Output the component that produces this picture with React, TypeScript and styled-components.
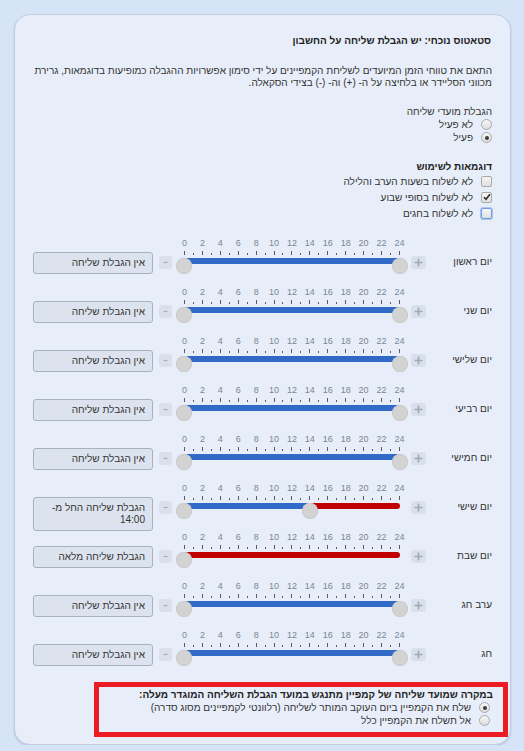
import React from 'react';
import styled, { createGlobalStyle } from 'styled-components';

const GlobalStyle = createGlobalStyle`
  html, body { margin: 0; padding: 0; background: #d6e4f8; }
  body {
    font-family: "Liberation Sans", Arial, "DejaVu Sans", sans-serif;
    font-size: 10px;
    color: #333;
  }
`;

const Page = styled.div`
  padding: 14px 13px 0 14px;
`;

const Card = styled.div`
  direction: rtl;
  width: 497px;
  box-sizing: border-box;
  background: #e8eef9;
  border: 1px solid #c3cfdf;
  border-radius: 16px;
  box-shadow: 0 1px 2px rgba(60, 80, 110, 0.25);
  padding: 19px 18px 7px 18px;
`;

const Title = styled.div`
  font-weight: bold;
  color: #222;
  line-height: 14px;
  margin-right: 1px;
`;

const Intro = styled.p`
  margin: 17px 0 0;
  line-height: 12px;
`;

const Group = styled.div`
  margin-top: 16px;
`;

const GroupHeading = styled.div<{ $bold?: boolean }>`
  line-height: 13px;
  font-weight: ${p => (p.$bold ? 'bold' : 'normal')};
  color: ${p => (p.$bold ? '#222' : '#333')};
`;

const OptionRow = styled.label<{ $h?: number }>`
  display: flex;
  align-items: center;
  gap: 8px;
  height: ${p => p.$h ?? 13}px;
  line-height: 13px;
  white-space: nowrap;
`;

const RadioDot = styled.span<{ $checked?: boolean }>`
  position: relative;
  width: 11px;
  height: 11px;
  box-sizing: border-box;
  border-radius: 50%;
  border: 1px solid #a9a9a9;
  background: linear-gradient(#f6f6f6, #dedede);
  flex: none;
  &::after {
    content: '';
    display: ${p => (p.$checked ? 'block' : 'none')};
    position: absolute;
    left: 2.5px;
    top: 2.5px;
    width: 4px;
    height: 4px;
    border-radius: 50%;
    background: #3c3c3c;
  }
`;

const CheckBox = styled.span<{ $focus?: boolean }>`
  width: 11px;
  height: 11px;
  box-sizing: border-box;
  border-radius: 2px;
  border: 1px solid ${p => (p.$focus ? '#6f9be0' : '#a9a9a9')};
  box-shadow: ${p => (p.$focus ? '0 0 0 1px #a9c5f0' : 'none')};
  background: linear-gradient(#f6f6f6, #e0e0e0);
  flex: none;
  display: flex;
  align-items: center;
  justify-content: center;
`;

const Sliders = styled.div`
  margin-top: 16px;
`;

const Row = styled.div`
  display: flex;
  align-items: flex-start;
  height: 49px;
`;

const DayLabel = styled.div`
  width: 56px;
  margin-left: 10px;
  margin-top: 18px;
  line-height: 14px;
  white-space: nowrap;
`;

const StepButton = styled.div<{ $w: number }>`
  width: ${p => p.$w}px;
  height: 13px;
  margin-top: 19px;
  border-radius: 3px;
  background: #d9e0ec;
  color: #a3abb8;
  display: flex;
  align-items: center;
  justify-content: center;
  flex: none;
`;

const Slider = styled.div`
  direction: ltr;
  width: 232px;
  margin: 0 3px 0 4px;
  flex: none;
`;

const Scale = styled.div`
  padding: 0 8px;
`;

const TickRow = styled.div`
  display: flex;
  justify-content: space-between;
  height: 18px;
`;

const Tick = styled.div`
  width: 1px;
  height: 18px;
  display: flex;
  flex-direction: column;
  align-items: center;
  justify-content: flex-end;
`;

const TickLabel = styled.span`
  font-size: 9px;
  line-height: 10px;
  color: #7b8593;
  white-space: nowrap;
  margin-bottom: 3px;
`;

const TickLine = styled.span<{ $major: boolean }>`
  width: 1px;
  height: ${p => (p.$major ? 4 : 2)}px;
  background: #5a5a5a;
  flex: none;
`;

const Track = styled.div`
  position: relative;
  height: 16px;
  margin-top: -2px;
`;

const Bar = styled.div`
  display: flex;
  height: 6px;
  margin: 5px 8px 0;
  border-radius: 3px;
  overflow: hidden;
`;

const Segment = styled.div<{ $red: boolean; $hours: number }>`
  flex: ${p => p.$hours} 0 0;
  background: ${p => (p.$red ? '#c00000' : '#3169c6')};
`;

const Thumb = styled.div`
  position: absolute;
  top: 0;
  width: 16px;
  height: 16px;
  border-radius: 50%;
  background: #d3d3d3;
  box-shadow: inset 0 0 0 1px #cbcbcb;
`;

const StatusBox = styled.div`
  width: 120px;
  box-sizing: border-box;
  margin-top: 15px;
  margin-right: 6px;
  padding: 4px 7px;
  line-height: 12px;
  border: 1px solid #a9b1bd;
  border-radius: 3px;
  background: #dce3ee;
  color: #333;
  white-space: nowrap;
  flex: none;
`;

const Notice = styled.div`
  margin-top: 4px;
  margin-right: -16px;
  width: 414px;
  box-sizing: border-box;
  border: 5px solid #ec1c24;
  padding: 1px 13px 5px;
`;

const NoticeTitle = styled.div`
  font-weight: bold;
  color: #222;
  line-height: 13px;
  margin-right: -3px;
`;

type Seg = { red: boolean; hours: number };
type Day = { name: string; segs: Seg[]; thumbs: number[]; status: React.ReactNode };

const FREE = 'אין הגבלת שליחה';

const days: Day[] = [
  { name: 'יום ראשון', segs: [{ red: false, hours: 24 }], thumbs: [0, 24], status: FREE },
  { name: 'יום שני', segs: [{ red: false, hours: 24 }], thumbs: [0, 24], status: FREE },
  { name: 'יום שלישי', segs: [{ red: false, hours: 24 }], thumbs: [0, 24], status: FREE },
  { name: 'יום רביעי', segs: [{ red: false, hours: 24 }], thumbs: [0, 24], status: FREE },
  { name: 'יום חמישי', segs: [{ red: false, hours: 24 }], thumbs: [0, 24], status: FREE },
  {
    name: 'יום שישי',
    segs: [{ red: false, hours: 14 }, { red: true, hours: 10 }],
    thumbs: [0, 14],
    status: (
      <>
        הגבלת שליחה החל מ-
        <br />
        14:00
      </>
    ),
  },
  { name: 'יום שבת', segs: [{ red: true, hours: 24 }], thumbs: [0], status: 'הגבלת שליחה מלאה' },
  { name: 'ערב חג', segs: [{ red: false, hours: 24 }], thumbs: [0, 24], status: FREE },
  { name: 'חג', segs: [{ red: false, hours: 24 }], thumbs: [0, 24], status: FREE },
];

const hours = Array.from({ length: 25 }, (_, i) => i);

function Plus() {
  return (
    <svg width="9" height="9" viewBox="0 0 9 9">
      <path d="M4.5 0.5v8M0.5 4.5h8" stroke="#a0a8b5" strokeWidth="1.6" />
    </svg>
  );
}

function Minus() {
  return (
    <svg width="5" height="3" viewBox="0 0 5 3">
      <path d="M0.5 1.5h4" stroke="#a6aebb" strokeWidth="1.2" />
    </svg>
  );
}

function Check() {
  return (
    <svg width="8" height="8" viewBox="0 0 8 8">
      <path d="M1 4.2l2 2L7 1.2" fill="none" stroke="#2b2b2b" strokeWidth="1.6" />
    </svg>
  );
}

function DayRow({ day }: { day: Day }) {
  return (
    <Row>
      <DayLabel>{day.name}</DayLabel>
      <StepButton $w={15}>
        <Plus />
      </StepButton>
      <Slider>
        <Scale>
          <TickRow>
            {hours.map(h => (
              <Tick key={h}>
                {h % 2 === 0 && <TickLabel>{h}</TickLabel>}
                <TickLine $major={h % 2 === 0} />
              </Tick>
            ))}
          </TickRow>
        </Scale>
        <Track>
          <Bar>
            {day.segs.map((s, i) => (
              <Segment key={i} $red={s.red} $hours={s.hours} />
            ))}
          </Bar>
          {day.thumbs.map(t => (
            <Thumb key={t} style={{ left: `${(t / 24) * 216}px` }} />
          ))}
        </Track>
      </Slider>
      <StepButton $w={13}>
        <Minus />
      </StepButton>
      <StatusBox>{day.status}</StatusBox>
    </Row>
  );
}

export default function App() {
  return (
    <>
      <GlobalStyle />
      <Page>
        <Card>
          <Title>סטאטוס נוכחי: יש הגבלת שליחה על החשבון</Title>
          <Intro>
            התאם את טווחי הזמן המיועדים לשליחת הקמפיינים על ידי סימון אפשרויות ההגבלה כמופיעות בדוגמאות, גרירת
            מכווני הסליידר או בלחיצה על ה- (+) וה- (-) בצידי הסקאלה.
          </Intro>

          <Group>
            <GroupHeading>הגבלת מועדי שליחה</GroupHeading>
            <OptionRow>
              <RadioDot />
              לא פעיל
            </OptionRow>
            <OptionRow>
              <RadioDot $checked />
              פעיל
            </OptionRow>
          </Group>

          <Group>
            <GroupHeading $bold>דוגמאות לשימוש</GroupHeading>
            <OptionRow $h={16}>
              <CheckBox />
              לא לשלוח בשעות הערב והלילה
            </OptionRow>
            <OptionRow $h={16}>
              <CheckBox>
                <Check />
              </CheckBox>
              לא לשלוח בסופי שבוע
            </OptionRow>
            <OptionRow $h={16}>
              <CheckBox $focus />
              לא לשלוח בחגים
            </OptionRow>
          </Group>

          <Sliders>
            {days.map(d => (
              <DayRow key={d.name} day={d} />
            ))}
          </Sliders>

          <Notice>
            <NoticeTitle>במקרה שמועד שליחה של קמפיין מתנגש במועד הגבלת השליחה המוגדר מעלה:</NoticeTitle>
            <OptionRow>
              <RadioDot $checked />
              שלח את הקמפיין ביום העוקב המותר לשליחה (רלוונטי לקמפיינים מסוג סדרה)
            </OptionRow>
            <OptionRow>
              <RadioDot />
              אל תשלח את הקמפיין כלל
            </OptionRow>
          </Notice>
        </Card>
      </Page>
    </>
  );
}
